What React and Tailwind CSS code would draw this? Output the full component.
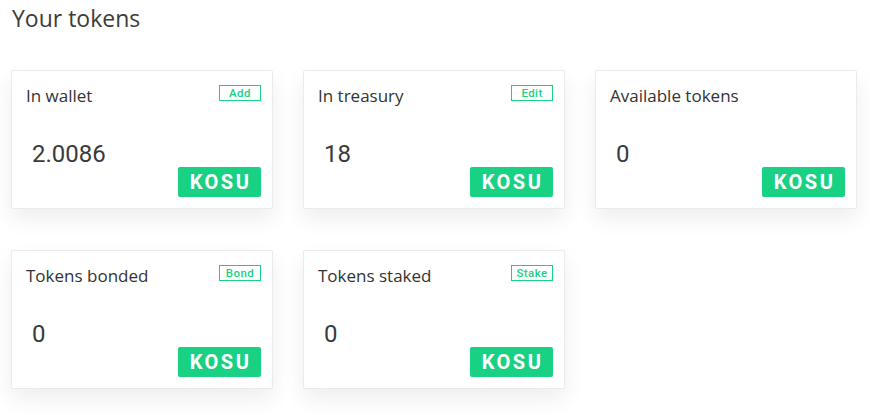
const cards = [
  { label: "In wallet", action: "Add", value: "2.0086" },
  { label: "In treasury", action: "Edit", value: "18" },
  { label: "Available tokens", action: null, value: "0" },
  { label: "Tokens bonded", action: "Bond", value: "0" },
  { label: "Tokens staked", action: "Stake", value: "0" },
];

function TokenCard({ label, action, value }) {
  return (
    <div className="w-[262px] h-[139px] bg-white border border-[#ebebeb] rounded-[2px] shadow-[0_10px_22px_rgba(0,0,0,0.07)] pl-[14px] pr-[11px] pt-[14px] flex flex-col">
      <div className="flex items-start justify-between h-[30px]">
        <span className="text-[17px] leading-[22px] text-[#333] font-['Open_Sans',sans-serif]">{label}</span>
        <span className="pt-[0px]">
          {action && (
            <span className="block h-[16px] w-[42px] border border-[#19d183] text-[#19d183] text-[11.5px] leading-[14px] text-center font-['Roboto',sans-serif] font-medium tracking-[0.4px]">
              {action}
            </span>
          )}
        </span>
      </div>
      <div className="mt-[25px] pl-[6px] text-[24px] leading-[28px] text-[#3a3a3a] font-['Roboto',sans-serif]">{value}</div>
      <div className="flex justify-end mt-[-1px]">
        <span className="w-[83px] h-[30px] rounded-[2px] bg-[#19d183] text-white text-[20px] leading-[30px] text-center font-bold font-['Roboto',sans-serif] tracking-[2.5px] pl-[2px]">
          KOSU
        </span>
      </div>
    </div>
  );
}

export default function App() {
  return (
    <div className="w-[870px] h-[415px] bg-white pl-[11px] pt-[3px]">
      <h1 className="text-[23px] leading-[30px] text-[#3c3c3c] font-['Open_Sans',sans-serif] pl-[1px]">Your tokens</h1>
      <div className="mt-[37px] grid grid-cols-[262px_262px_262px] gap-x-[30px] gap-y-[41px]">
        {cards.map((c) => (
          <TokenCard key={c.label} {...c} />
        ))}
      </div>
    </div>
  );
}
